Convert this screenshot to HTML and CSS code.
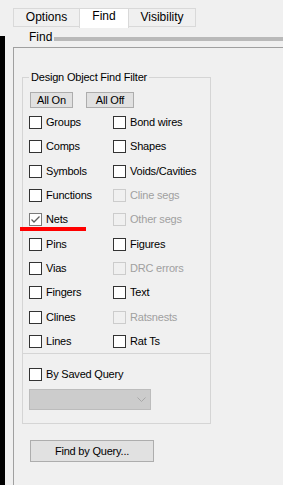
FILE: index.html
```html
<!DOCTYPE html>
<html lang="en">
<head>
    <meta charset="UTF-8">
    <meta name="viewport" content="width=device-width, initial-scale=1.0">
    <title>Find</title>
    <link rel="stylesheet" href="styles.css">
</head>
<body>
    <div class="tabs">
        <div class="tab tab-options">Options</div>
        <div class="tab tab-find active">Find</div>
        <div class="tab tab-visibility">Visibility</div>
    </div>

    <div class="main">
        <div class="edge"></div>
        <div class="pane">
            <div class="heading">
                <span>Find</span>
                <div class="heading-bar"></div>
            </div>

            <div class="panel">
                <fieldset class="filter">
                    <legend>Design Object Find Filter</legend>
                    <div class="filter-buttons">
                        <button class="button btn-on">All On</button>
                        <button class="button btn-off">All Off</button>
                    </div>
                    <div class="checks">
                        <label class="check"><span class="box"></span>Groups</label>
                        <label class="check"><span class="box"></span>Bond wires</label>
                        <label class="check"><span class="box"></span>Comps</label>
                        <label class="check"><span class="box"></span>Shapes</label>
                        <label class="check"><span class="box"></span>Symbols</label>
                        <label class="check"><span class="box"></span>Voids/Cavities</label>
                        <label class="check"><span class="box"></span>Functions</label>
                        <label class="check disabled"><span class="box"></span>Cline segs</label>
                        <label class="check">
                            <span class="box checked">
                                <svg width="11" height="11" viewBox="0 0 11 11"><polyline points="1.5,5.5 4,8 9.5,2.5" fill="none" stroke="#5f5f5f" stroke-width="1.3"/></svg>
                            </span>Nets
                        </label>
                        <label class="check disabled"><span class="box"></span>Other segs</label>
                        <label class="check"><span class="box"></span>Pins</label>
                        <label class="check"><span class="box"></span>Figures</label>
                        <label class="check"><span class="box"></span>Vias</label>
                        <label class="check disabled"><span class="box"></span>DRC errors</label>
                        <label class="check"><span class="box"></span>Fingers</label>
                        <label class="check"><span class="box"></span>Text</label>
                        <label class="check"><span class="box"></span>Clines</label>
                        <label class="check disabled"><span class="box"></span>Ratsnests</label>
                        <label class="check"><span class="box"></span>Lines</label>
                        <label class="check"><span class="box"></span>Rat Ts</label>
                    </div>
                </fieldset>

                <div class="query">
                    <label class="check"><span class="box"></span>By Saved Query</label>
                    <div class="combo">
                        <svg width="9" height="5" viewBox="0 0 9 5"><polyline points="0.5,0.5 4.5,4.5 8.5,0.5" fill="none" stroke="#a8a8a8" stroke-width="1"/></svg>
                    </div>
                </div>

                <button class="button btn-query">Find by Query...</button>
            </div>
        </div>
    </div>

    <!-- red annotation under Nets -->
    <div class="mark"></div>
</body>
</html>
```

FILE: styles.css
```css
html, body {
    margin: 0;
    padding: 0;
}

body {
    position: relative;
    height: 100vh;
    background-color: #f0f0f0;
    font-family: "Liberation Sans", Arial, sans-serif;
    font-size: 11px;
    color: #000;
    overflow: hidden;
}

/* tab strip */
.tabs {
    display: flex;
    align-items: flex-end;
    height: 27px;
    padding-left: 13px;
    box-sizing: border-box;
}

.tab {
    box-sizing: border-box;
    height: 19px;
    border: 1px solid #d9d9d9;
    background-color: #f0f0f0;
    font-size: 12px;
    line-height: 16px;
    text-align: center;
}

.tab-options {
    width: 66px;
    border-right: none;
}

.tab-find {
    width: 50px;
}

.tab-visibility {
    width: 67px;
    border-left: none;
}

.tab.active {
    height: 20px;
    margin-bottom: -1px;
    background-color: #fff;
    border-bottom: none;
    line-height: 14px;
}

/* main area */
.main {
    display: flex;
    min-height: calc(100vh - 27px);
}

.edge {
    width: 5px;
    margin-top: 9px;
    background-color: #000;
}

.pane {
    flex: 1;
    margin-left: 8px;
}

.heading {
    display: flex;
    height: 20px;
    padding-left: 16px;
    font-size: 12px;
    line-height: 20px;
}

.heading-bar {
    flex: 1;
    height: 4px;
    margin-top: 10px;
    margin-left: 2px;
    background-color: #b9b9b9;
}

.panel {
    border-top: 1px solid #a0a0a0;
    border-left: 1px solid #a0a0a0;
    padding-left: 8px;
    min-height: 440px;
}

/* group box */
.filter {
    box-sizing: border-box;
    width: 189px;
    min-width: 0;
    margin: 23px 0 0 0;
    padding: 0 0 5px 0;
    border: 1px solid #d5d5d5;
}

.filter legend {
    margin-left: 6px;
    padding: 0 2px;
    line-height: 13px;
    letter-spacing: -0.2px;
}

.filter-buttons {
    display: flex;
    gap: 13px;
    margin: 8px 0 0 7px;
}

.button {
    box-sizing: border-box;
    padding: 0;
    border: 1px solid #adadad;
    border-radius: 0;
    background-color: #e1e1e1;
    font-family: inherit;
    font-size: 11px;
    letter-spacing: -0.2px;
    color: #000;
    line-height: 14px;
}

.btn-on {
    width: 43px;
    height: 16px;
}

.btn-off {
    width: 48px;
    height: 16px;
}

.checks {
    display: grid;
    grid-template-columns: 84px 1fr;
    grid-auto-rows: 13px;
    row-gap: 11.33px;
    margin-top: 8px;
    padding-left: 6px;
}

.check {
    display: flex;
    align-items: flex-start;
    gap: 4px;
    line-height: 13px;
    letter-spacing: -0.2px;
    white-space: nowrap;
}

.box {
    box-sizing: border-box;
    flex: none;
    width: 13px;
    height: 13px;
    border: 1px solid #333;
    background-color: #fff;
}

.box.checked {
    border-color: #7a7a7a;
}

.box svg {
    display: block;
}

.check.disabled {
    color: #a0a0a0;
}

.check.disabled .box {
    border-color: #cccccc;
    background-color: #f0f0f0;
}

/* saved query section */
.query {
    box-sizing: border-box;
    width: 189px;
    padding: 14px 0 13px 6px;
    border: 1px solid #d5d5d5;
    border-top: none;
}

.combo {
    box-sizing: border-box;
    display: flex;
    align-items: center;
    justify-content: flex-end;
    width: 122px;
    height: 21px;
    margin-top: 8px;
    padding-right: 4px;
    border: 1px solid #bcbcbc;
    background-color: #cccccc;
}

.combo svg {
    display: block;
}

.btn-query {
    display: block;
    width: 124px;
    height: 22px;
    margin: 16px 0 0 8px;
}

.mark {
    position: absolute;
    left: 20px;
    top: 227px;
    width: 66px;
    height: 4px;
    background-color: #ff0000;
}
```
